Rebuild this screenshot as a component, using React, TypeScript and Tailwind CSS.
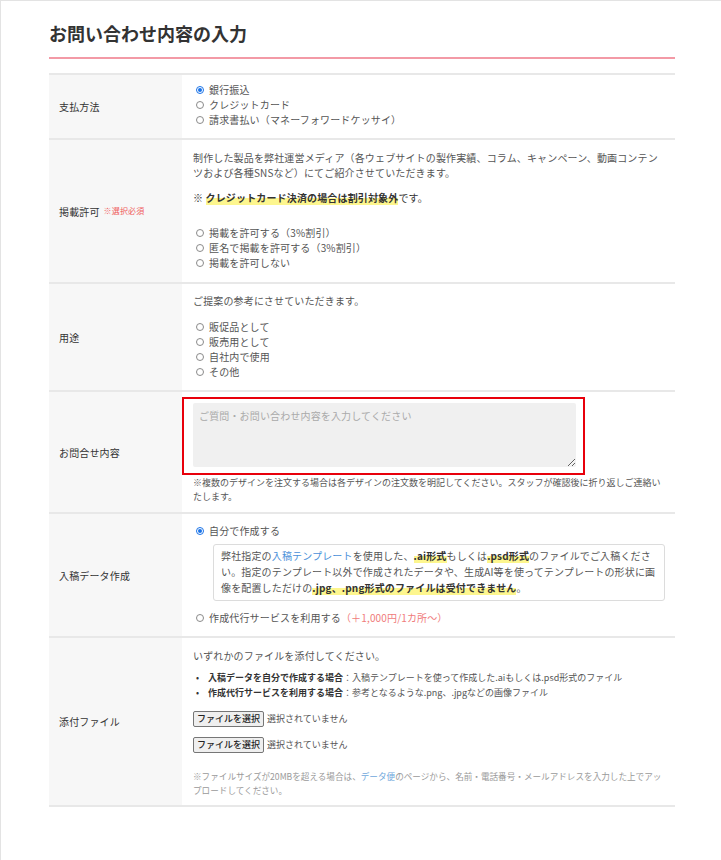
import React from "react";

function Radio({ checked = false }: { checked?: boolean }) {
  return checked ? (
    <span className="ml-[3px] mr-[5px] inline-flex h-[8px] w-[8px] shrink-0 items-center justify-center rounded-full border border-[#1a73e8] bg-white">
      <span className="h-[4px] w-[4px] rounded-full bg-[#1a73e8]" />
    </span>
  ) : (
    <span className="ml-[3px] mr-[5px] inline-block h-[8px] w-[8px] shrink-0 rounded-full border border-[#8a8a8a] bg-white" />
  );
}

function RadioLine({ children, checked = false }: { children: React.ReactNode; checked?: boolean }) {
  return (
    <div className="flex items-center leading-[15px]">
      <Radio checked={checked} />
      <span>{children}</span>
    </div>
  );
}

function Hl({ children }: { children: React.ReactNode }) {
  return (
    <span className="bg-[linear-gradient(transparent_55%,#fdf68e_55%)] font-bold text-[#333]">{children}</span>
  );
}

function Row({ label, children, className = "" }: { label: React.ReactNode; children: React.ReactNode; className?: string }) {
  return (
    <div className="flex border-b-2 border-[#e8e8e8]">
      <div className="flex w-[133px] shrink-0 items-center bg-[#f7f7f7] pl-[10px] text-[10px] text-[#333]">{label}</div>
      <div className={"min-w-0 flex-1 pr-[10px] " + className}>{children}</div>
    </div>
  );
}

function FileRow() {
  return (
    <div className="flex items-center tracking-normal">
      <span className="inline-flex h-[16px] items-center rounded-[2px] border border-[#767676] bg-[#efefef] px-[3px] text-[9px] font-medium text-[#222]">
        ファイルを選択
      </span>
      <span className="ml-[3px] text-[9px] text-[#555]">選択されていません</span>
    </div>
  );
}

export default function App() {
  return (
    <div className="min-h-[860px] border-l border-t border-[#e3e3e3] bg-white font-['Noto_Sans_CJK_JP','Noto_Sans',sans-serif] text-[10px] tracking-[0.15px] text-[#555]">
      <div className="ml-[48px] w-[626px]">
        <h1 className="pt-[19px] text-[18px] font-bold leading-[26px] tracking-normal text-[#333]">お問い合わせ内容の入力</h1>
        <div className="mt-[11px] h-[2px] bg-[#f39aa6]" />
        <div className="mt-[14px] border-t-2 border-[#e8e8e8]">
          <Row label="支払方法" className="pl-[11px] pb-[11px] pt-[7px]">
            <RadioLine checked>銀行振込</RadioLine>
            <RadioLine>クレジットカード</RadioLine>
            <RadioLine>請求書払い（マネーフォワードケッサイ）</RadioLine>
          </Row>

          <Row
            label={
              <span className="flex items-center">
                掲載許可<span className="ml-[4px] text-[8px] text-[#ef5d5d]">※選択必須</span>
              </span>
            }
            className="pl-[11px] pb-[12px] pt-[10px]"
          >
            <p className="leading-[15px]">
              制作した製品を弊社運営メディア（各ウェブサイトの製作実績、コラム、キャンペーン、動画コンテンツおよび各種SNSなど）にてご紹介させていただきます。
            </p>
            <p className="mt-[10px] leading-[15px] text-[#333]">
              ※ <Hl>クレジットカード決済の場合は割引対象外</Hl>です。
            </p>
            <div className="mt-[20px]">
              <RadioLine>掲載を許可する（3%割引）</RadioLine>
              <RadioLine>匿名で掲載を許可する（3%割引）</RadioLine>
              <RadioLine>掲載を許可しない</RadioLine>
            </div>
          </Row>

          <Row label="用途" className="pl-[11px] pb-[11px] pt-[9px]">
            <p className="leading-[15px]">ご提案の参考にさせていただきます。</p>
            <div className="mt-[11px]">
              <RadioLine>販促品として</RadioLine>
              <RadioLine>販売用として</RadioLine>
              <RadioLine>自社内で使用</RadioLine>
              <RadioLine>その他</RadioLine>
            </div>
          </Row>

          <Row label="お問合せ内容" className="pb-[8px] pt-[5px]">
            <div className="w-[403px] border-2 border-[#e8000b] pb-[6px] pl-[9px] pr-[7px] pt-[4px]">
              <textarea
                className="block h-[64px] w-[383px] rounded-[2px] border-0 bg-[#f0f0f0] px-[6px] py-[5px] text-[10px] leading-[15px] text-[#333] outline-none placeholder:text-[#aaa]"
                placeholder="ご質問・お問い合わせ内容を入力してください"
              />
            </div>
            <p className="mt-[1px] pl-[11px] text-[9px] leading-[14px] tracking-normal text-[#555]">
              ※複数のデザインを注文する場合は各デザインの注文数を明記してください。スタッフが確認後に折り返しご連絡いたします。
            </p>
          </Row>

          <Row label="入稿データ作成" className="pl-[11px] pb-[11px] pt-[9px]">
            <RadioLine checked>自分で作成する</RadioLine>
            <div className="ml-[20px] mt-[6px] rounded-[3px] border border-[#dcdcdc] px-[7px] pb-[4px] pt-[3px] leading-[16px]">
              弊社指定の<span className="text-[#4a90d9]">入稿テンプレート</span>を使用した、<Hl>.ai形式</Hl>もしくは<Hl>.psd形式</Hl>のファイルでご入稿ください。指定のテンプレート以外で作成されたデータや、生成AI等を使ってテンプレートの形状に画像を配置しただけの<Hl>.jpg、.png形式のファイルは受付できません</Hl>。
            </div>
            <div className="mt-[9px]">
              <RadioLine>
                作成代行サービスを利用する<span className="text-[#f07b7b]">（＋1,000円/1カ所〜）</span>
              </RadioLine>
            </div>
          </Row>

          <Row label="添付ファイル" className="pl-[11px] pb-[8px] pt-[10px]">
            <p className="leading-[15px]">いずれかのファイルを添付してください。</p>
            <ul className="mt-[7px] text-[9px] leading-[15px] tracking-normal">
              <li className="flex">
                <span className="w-[15px] shrink-0 pl-[3px] text-[#333]">•</span>
                <span>
                  <b className="text-[#333]">入稿データを自分で作成する場合</b>：入稿テンプレートを使って作成した.aiもしくは.psd形式のファイル
                </span>
              </li>
              <li className="flex">
                <span className="w-[15px] shrink-0 pl-[3px] text-[#333]">•</span>
                <span>
                  <b className="text-[#333]">作成代行サービスを利用する場合</b>：参考となるような.png、.jpgなどの画像ファイル
                </span>
              </li>
            </ul>
            <div className="mt-[11px]">
              <FileRow />
            </div>
            <div className="mt-[10px]">
              <FileRow />
            </div>
            <p className="mt-[16px] text-[8.6px] leading-[14px] tracking-normal text-[#9a9a9a]">
              ※ファイルサイズが20MBを超える場合は、<span className="text-[#6fa8dc]">データ便</span>のページから、名前・電話番号・メールアドレスを入力した上でアップロードしてください。
            </p>
          </Row>
        </div>
      </div>
    </div>
  );
}
